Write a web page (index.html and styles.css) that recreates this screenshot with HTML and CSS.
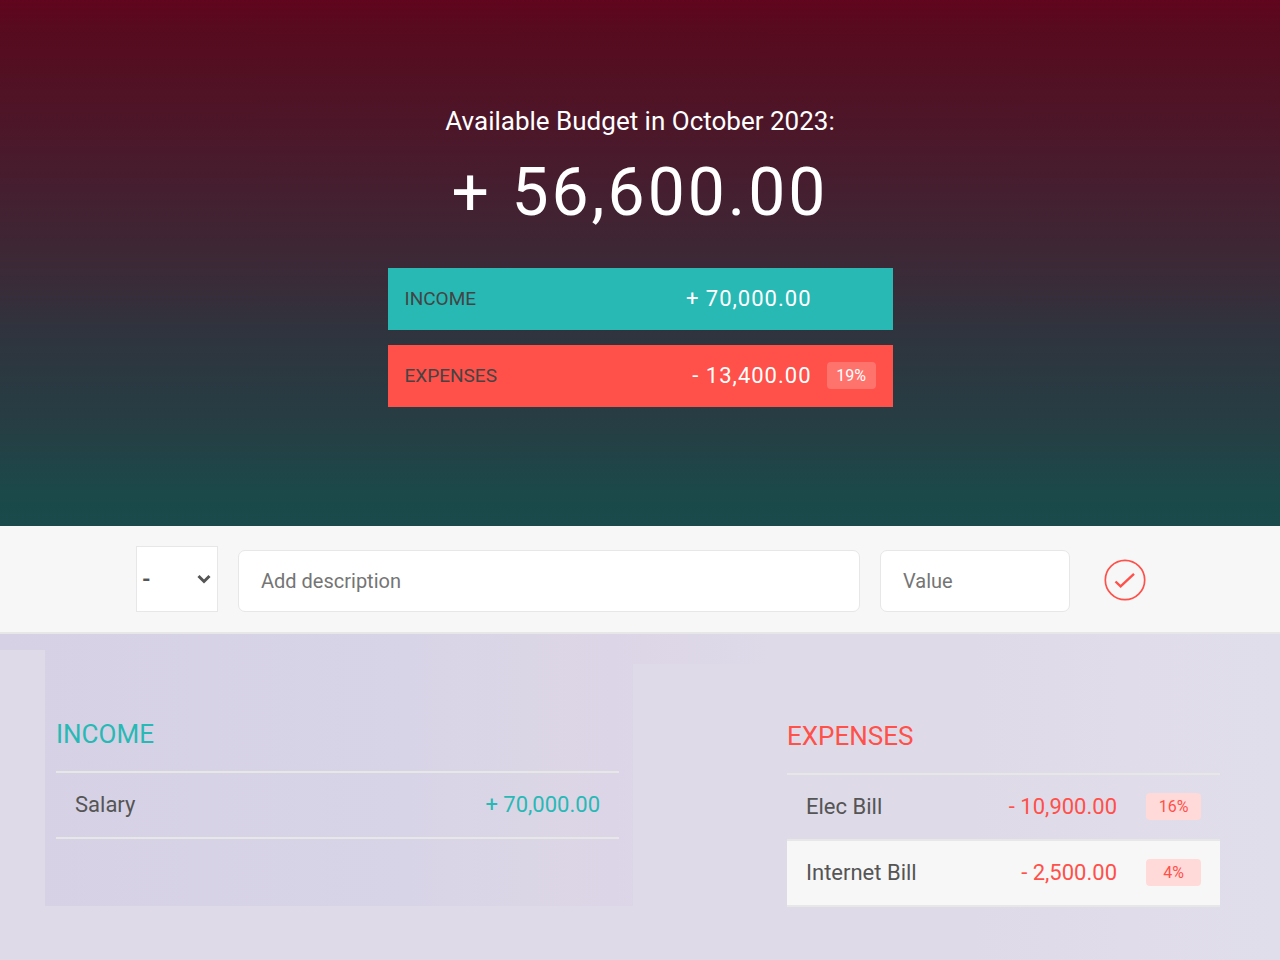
FILE: index.html
```html
<!DOCTYPE html>
<html lang="en">
<head>
<meta charset="utf-8">
<meta name="viewport" content="width=device-width, initial-scale=1">
<title>Budget</title>
<link rel="stylesheet" href="styles.css">
</head>
<body>
<header class="top">
  <h1 class="top-title">Available Budget in October 2023:</h1>
  <p class="top-value">+ 56,600.00</p>
  <div class="totals">
    <div class="total total-income">
      <span class="total-label">Income</span>
      <span class="total-value">+ 70,000.00</span>
      <span class="total-percent"></span>
    </div>
    <div class="total total-expenses">
      <span class="total-label">Expenses</span>
      <span class="total-value">- 13,400.00</span>
      <span class="total-percent total-percent-filled">19%</span>
    </div>
  </div>
</header>
<main class="content">
  <form class="add">
    <div class="type">
      <select class="type-select" aria-label="Type">
        <option>+</option>
        <option selected>-</option>
      </select>
      <svg class="type-arrow" viewBox="0 0 14 10" aria-hidden="true"><path d="M1.5 2 7 7.5 12.500 2" fill="none" stroke="#555" stroke-width="3"/></svg>
    </div>
    <input class="field field-description" type="text" placeholder="Add description" aria-label="Description">
    <input class="field field-value" type="text" placeholder="Value" aria-label="Value">
    <button class="add-button" type="button" aria-label="Add">
      <svg class="add-icon" viewBox="0 0 42 42" aria-hidden="true"><circle cx="21" cy="21" r="19.700" fill="none" stroke="currentColor" stroke-width="1.700"/><path d="M11.500 22.500 16.600 27.300 30 14.800" fill="none" stroke="currentColor" stroke-width="2.400"/></svg>
    </button>
  </form>
  <div class="lists">
    <div class="income-column">
      <section class="income">
        <h2 class="list-title">Income</h2>
        <ul class="list">
          <li class="item"><span class="item-name">Salary</span><span class="item-value">+ 70,000.00</span></li>
        </ul>
      </section>
    </div>
    <section class="expenses">
      <h2 class="list-title">Expenses</h2>
      <ul class="list">
        <li class="item"><span class="item-name">Elec Bill</span><span class="item-value">- 10,900.00</span><span class="item-percent">16%</span></li>
        <li class="item"><span class="item-name">Internet Bill</span><span class="item-value">- 2,500.00</span><span class="item-percent">4%</span></li>
      </ul>
    </section>
  </div>
</main>
</body>
</html>
```
FILE: styles.css
```css
* {
  box-sizing: border-box;
  margin: 0;
  padding: 0;
}

body {
  display: flex;
  flex-direction: column;
  min-height: 100vh;
  font-family: Roboto, "Liberation Sans", sans-serif;
  color: #555;
}

/* Summary */
.top {
  padding: 105px 24px 119px;
  background: linear-gradient(#60051d 0%, #580a1e 5%, #4a192b 28%, #3a2b38 53%, #30333d 62%, #263e44 81%, #1b494a 94%, #1a4a4b 100%);
  color: #fff;
}

.top-title {
  font-size: 26px;
  font-weight: 400;
  line-height: 32px;
  text-align: center;
}

.top-value {
  margin: 17px 0 36px;
  font-size: 66px;
  line-height: 78px;
  letter-spacing: 3px;
  text-align: center;
}

.totals {
  display: grid;
  gap: 15px;
  max-width: 505px;
  margin: 0 auto;
}

.total {
  display: flex;
  align-items: center;
  height: 62px;
  padding: 0 17px 1px;
}

.total-income {
  background: #28b9b5;
}

.total-expenses {
  background: #ff5049;
}

.total-label {
  flex: 1;
  color: #444;
  font-size: 19px;
  line-height: 22px;
  text-transform: uppercase;
}

.total-value {
  margin-right: 15px;
  font-size: 22px;
  line-height: 26px;
  letter-spacing: 1px;
}

.total-percent {
  width: 49px;
  border-radius: 4px;
  font-size: 16px;
  line-height: 27px;
  text-align: center;
}

.total-percent-filled {
  background: rgba(255, 255, 255, 0.2);
}

/* Entry form */
.content {
  display: flex;
  flex: 1;
  flex-direction: column;
}

.add {
  display: flex;
  align-items: center;
  gap: 20px;
  padding: 20px 134px 20px 136px;
  border-bottom: 2px solid #e7e7e7;
  background: #f7f7f7;
}

.type {
  position: relative;
  width: 82px;
  height: 66px;
}

.type-select {
  width: 100%;
  height: 100%;
  padding: 2px 5px 0;
  border: 1px solid #e7e7e7;
  appearance: none;
  background: #fff;
  color: #555;
  font: 700 22px/26px Roboto, sans-serif;
}

.type-arrow {
  position: absolute;
  top: 28px;
  right: 7px;
  width: 14px;
  pointer-events: none;
}

.field {
  min-width: 0;
  height: 62px;
  margin-top: 4px;
  padding: 0 22px;
  border: 1px solid #e7e7e7;
  border-radius: 7px;
  background: #fff;
  color: #555;
  font: 400 20px/24px Roboto, sans-serif;
}

.field::placeholder {
  color: #757575;
}

.field-description {
  flex: 1;
}

.field-value {
  width: 190px;
}

.add-button {
  width: 42px;
  height: 42px;
  margin-top: 2px;
  margin-left: 14px;
  border: 0;
  background: none;
  color: #ff5049;
}

.add-icon {
  display: block;
}

/* Lists */
.lists {
  display: grid;
  flex: 1;
  grid-template-columns: 45fr 588fr 144fr 503fr;
  background: linear-gradient(90deg, #d6d1e4 0%, #d8d4e7 32%, #dbd6e6 41%, #dcd5e7 48%, #dedae8 60%, #dfdae8 76%, #e1deec 100%);
}

.lists::before,
.lists::after {
  content: "";
  margin-top: 16px;
  background: #dedae8;
}

.lists::after {
  grid-row: 1;
  grid-column: 3;
  margin-top: 30px;
}

.income-column {
  display: flex;
  flex-direction: column;
}

.income-column::after {
  content: "";
  flex: 1;
  background: #dedae8;
}

.income {
  padding: 84px 14px 67px 11px;
  color: #28b9b5;
}

.expenses {
  grid-row: 1;
  grid-column: 4;
  padding: 86px 60px 52px 10px;
  color: #ff5049;
}

.list-title {
  margin-bottom: 21px;
  font-size: 26px;
  font-weight: 400;
  line-height: 32px;
  text-transform: uppercase;
}

.list {
  border-top: 2px solid #e7e7e7;
  list-style: none;
}

.item {
  display: flex;
  align-items: center;
  height: 66px;
  padding: 0 19px 1px;
  border-bottom: 2px solid #e7e7e7;
  font-size: 22px;
}

.item:nth-child(even) {
  background: #f7f7f7;
}

.item-name {
  flex: 1;
  color: #555;
}

.item-percent {
  width: 55px;
  margin-left: 29px;
  border-radius: 4px;
  background: #ffdad9;
  font-size: 16px;
  line-height: 27px;
  text-align: center;
}
```
